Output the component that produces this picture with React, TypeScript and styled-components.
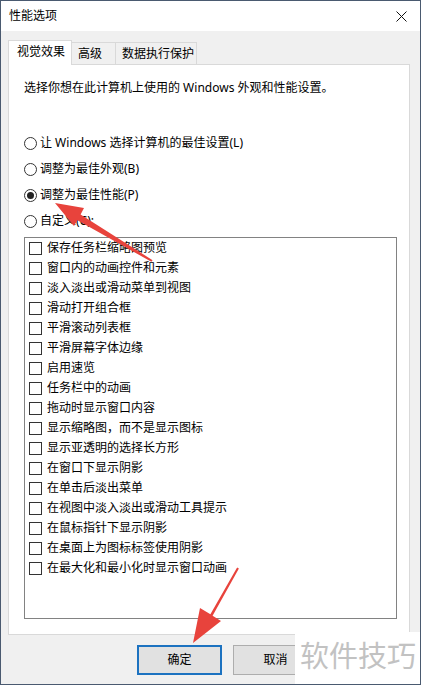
import React from 'react';
import styled, { createGlobalStyle } from 'styled-components';

const radioOptions = [
  { label: '让 Windows 选择计算机的最佳设置(L)', checked: false },
  { label: '调整为最佳外观(B)', checked: false },
  { label: '调整为最佳性能(P)', checked: true },
  { label: '自定义(C):', checked: false },
];

const effects = [
  '保存任务栏缩略图预览',
  '窗口内的动画控件和元素',
  '淡入淡出或滑动菜单到视图',
  '滑动打开组合框',
  '平滑滚动列表框',
  '平滑屏幕字体边缘',
  '启用速览',
  '任务栏中的动画',
  '拖动时显示窗口内容',
  '显示缩略图，而不是显示图标',
  '显示亚透明的选择长方形',
  '在窗口下显示阴影',
  '在单击后淡出菜单',
  '在视图中淡入淡出或滑动工具提示',
  '在鼠标指针下显示阴影',
  '在桌面上为图标标签使用阴影',
  '在最大化和最小化时显示窗口动画',
];

const App = () => {
  return (
    <>
      <GlobalStyle />
      <Window>
        <TitleBar>
          <Title>性能选项</Title>
          <CloseButton aria-label="关闭">
            <svg width="11" height="11" viewBox="0 0 11 11">
              <path d="M0.5 0.5 L10.5 10.5 M10.5 0.5 L0.5 10.5" stroke="#111" strokeWidth="1" fill="none" />
            </svg>
          </CloseButton>
        </TitleBar>

        <Body>
          <TabStrip>
            <Tab $active $width={64}>视觉效果</Tab>
            <Tab $width={45}>高级</Tab>
            <Tab $width={82}>数据执行保护</Tab>
          </TabStrip>

          <Panel>
            <Intro>选择你想在此计算机上使用的 Windows 外观和性能设置。</Intro>

            <RadioGroup>
              {radioOptions.map((option) => (
                <RadioRow key={option.label}>
                  <RadioCircle $checked={option.checked} />
                  <span>{option.label}</span>
                </RadioRow>
              ))}
            </RadioGroup>

            <ListBox>
              {effects.map((effect) => (
                <CheckRow key={effect}>
                  <CheckBox />
                  <span>{effect}</span>
                </CheckRow>
              ))}
            </ListBox>
          </Panel>

          <ButtonRow>
            <Button $primary>确定</Button>
            <Button>取消</Button>
          </ButtonRow>
        </Body>

        <Annotations width="421" height="685" viewBox="0 0 421 685">
          <polygon
            points="55,203 84,208 80.6,214.6 152.6,260.2 151.4,261.8 77.4,220.2 74,226"
            fill="#e8433c"
          />
          <polygon
            points="193,643 200,608 210.4,614.2 237.1,567.5 238.9,568.5 212.6,615.8 221,621"
            fill="#e8433c"
          />
        </Annotations>

        <Watermark>软件技巧</Watermark>
      </Window>
    </>
  );
};

const GlobalStyle = createGlobalStyle`
  html, body {
    margin: 0;
    padding: 0;
    width: 421px;
    height: 685px;
    overflow: hidden;
    background: #ffffff;
  }

  * {
    box-sizing: border-box;
  }

  body {
    font-family: 'Noto Sans', 'Noto Sans CJK SC', sans-serif;
    font-size: 12px;
    color: #111;
  }
`;

const Window = styled.div`
  position: relative;
  display: flex;
  flex-direction: column;
  width: 421px;
  height: 685px;
  border: 1px solid #4a5a70;
  background: #f0f0f0;
  overflow: hidden;
`;

const TitleBar = styled.div`
  display: flex;
  align-items: center;
  justify-content: space-between;
  height: 30px;
  padding-left: 8px;
  background: #ffffff;
`;

const Title = styled.span`
  font-size: 12px;
  line-height: 16px;
  color: #000;
`;

const CloseButton = styled.div`
  display: flex;
  align-items: center;
  justify-content: center;
  width: 30px;
  height: 30px;
  margin-right: 4px;
`;

const Body = styled.div`
  display: flex;
  flex-direction: column;
  flex: 1;
  padding: 9px 10px 9px 7px;
`;

const TabStrip = styled.div`
  position: relative;
  z-index: 1;
  display: flex;
  align-items: flex-end;
  height: 25px;
  margin-bottom: -1px;
`;

const Tab = styled.div<{ $active?: boolean; $width: number }>`
  display: flex;
  align-items: center;
  width: ${(p) => p.$width}px;
  height: ${(p) => (p.$active ? '25px' : '22px')};
  margin-bottom: ${(p) => (p.$active ? '0' : '1px')};
  margin-left: ${(p) => (p.$active ? '0' : '-1px')};
  padding-left: ${(p) => (p.$active ? '8px' : '6px')};
  padding-bottom: ${(p) => (p.$active ? '2px' : '0')};
  border: 1px solid #d9d9d9;
  border-bottom: none;
  background: ${(p) => (p.$active ? '#ffffff' : '#f0f0f0')};
  line-height: 16px;
  color: #000;

  &:first-child {
    margin-left: 0;
  }
`;

const Panel = styled.div`
  display: flex;
  flex-direction: column;
  height: 571px;
  padding: 15px 0 0 15px;
  border: 1px solid #d9d9d9;
  background: #ffffff;
`;

const Intro = styled.div`
  line-height: 16px;
  color: #000;
`;

const RadioGroup = styled.div`
  display: flex;
  flex-direction: column;
  margin-top: 34px;
`;

const RadioRow = styled.div`
  display: flex;
  align-items: center;
  gap: 3px;
  height: 26px;
  line-height: 16px;
  color: #000;
`;

const RadioCircle = styled.span<{ $checked: boolean }>`
  position: relative;
  width: 13px;
  height: 13px;
  border: 1px solid #333;
  border-radius: 50%;
  background: #fff;

  &::after {
    content: '';
    display: ${(p) => (p.$checked ? 'block' : 'none')};
    position: absolute;
    left: 2px;
    top: 2px;
    width: 7px;
    height: 7px;
    border-radius: 50%;
    background: #222;
  }
`;

const ListBox = styled.div`
  display: flex;
  flex-direction: column;
  width: 373px;
  height: 382px;
  margin-top: 3px;
  padding-left: 4px;
  border: 1px solid #828282;
  background: #ffffff;
`;

const CheckRow = styled.div`
  display: flex;
  align-items: center;
  gap: 5px;
  height: 20px;
  line-height: 16px;
  color: #000;
`;

const CheckBox = styled.span`
  width: 13px;
  height: 13px;
  border: 1px solid #333;
  background: #fff;
`;

const ButtonRow = styled.div`
  display: flex;
  gap: 11px;
  margin-top: 10px;
  padding-left: 129px;
`;

const Button = styled.div<{ $primary?: boolean }>`
  display: flex;
  align-items: center;
  justify-content: center;
  width: 85px;
  height: 30px;
  border: ${(p) => (p.$primary ? '2px solid #1c72c0' : '1px solid #adadad')};
  background: #e1e1e1;
  line-height: 16px;
  color: #000;
`;

const Annotations = styled.svg`
  position: absolute;
  left: -1px;
  top: -1px;
  pointer-events: none;
`;

const Watermark = styled.div`
  position: absolute;
  right: -1px;
  bottom: -1px;
  width: 126px;
  height: 53px;
  padding: 6px 0 0 5px;
  background: #ffffff;
  font-family: 'Noto Sans CJK SC', sans-serif;
  font-size: 29px;
  line-height: 32px;
  color: #c2c2c2;
  white-space: nowrap;
`;

export default App;
